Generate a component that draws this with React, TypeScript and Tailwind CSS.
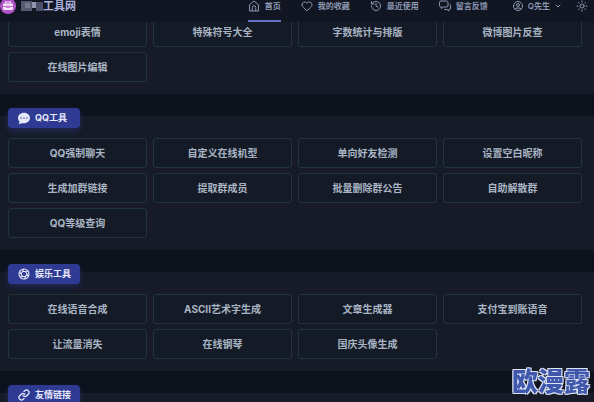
import type { ReactNode } from 'react';
import { ChevronDown, Heart, History, Sun } from 'lucide-react';
import { BsChatDotsFill } from 'react-icons/bs';
import { FiLink } from 'react-icons/fi';
import { TbUserCircle } from 'react-icons/tb';

type ToolSection = {
  title: string;
  icon: ReactNode;
  tools: string[];
};

const sections: ToolSection[] = [
  {
    title: 'QQ工具',
    icon: <BsChatDotsFill className="size-3" />,
    tools: [
      'QQ强制聊天',
      '自定义在线机型',
      '单向好友检测',
      '设置空白昵称',
      '生成加群链接',
      '提取群成员',
      '批量删除群公告',
      '自助解散群',
      'QQ等级查询',
    ],
  },
  {
    title: '娱乐工具',
    icon: <ApertureIcon />,
    tools: [
      '在线语音合成',
      'ASCII艺术字生成',
      '文章生成器',
      '支付宝到账语音',
      '让流量消失',
      '在线钢琴',
      '国庆头像生成',
    ],
  },
  { title: '友情链接', icon: <FiLink className="size-3" strokeWidth={2.5} />, tools: [] },
];

const imageTools = ['emoji表情', '特殊符号大全', '字数统计与排版', '微博图片反查', '在线图片编辑'];

function ApertureIcon() {
  return (
    <svg viewBox="0 0 24 24" className="size-3" fill="none" stroke="currentColor" strokeWidth="2.2">
      <circle cx="12" cy="12" r="10" />
      <path d="M9 7h6l3 5-3 5H9l-3-5zM9 7l2-5M15 7l5-1M18 12l3 5M15 17l-2 5M9 17l-5 1M6 12L3 7" />
    </svg>
  );
}

function HomeIcon() {
  return (
    <svg viewBox="0 0 24 24" className="size-3" fill="none" stroke="currentColor" strokeWidth="2" strokeLinejoin="round">
      <path d="M3 9.5 12 2l9 7.5V22H3z" />
      <path d="M8.5 22v-7a3.5 3.5 0 0 1 7 0v7" />
    </svg>
  );
}

function ChatsIcon() {
  return (
    <svg viewBox="0 0 24 24" className="size-3" fill="none" stroke="currentColor" strokeWidth="2" strokeLinejoin="round">
      <path d="M4 2h11a3 3 0 0 1 3 3v6a3 3 0 0 1-3 3H9l-4 3v-3H4a3 3 0 0 1-3-3V5a3 3 0 0 1 3-3z" />
      <path d="M21 8a3 3 0 0 1 2 3v5a3 3 0 0 1-3 3v3l-4-3h-4a3 3 0 0 1-2-1" />
    </svg>
  );
}

function ToolGrid({ tools }: { tools: string[] }) {
  return (
    <div className="grid grid-cols-4 gap-x-1.5 gap-y-[5px]">
      {tools.map((tool) => (
        <a
          key={tool}
          href="#"
          className="flex h-[30px] items-center justify-center rounded-[3px] border border-[#20353d] bg-[#151b26] text-[10px] font-bold whitespace-nowrap text-[#a9b5c4]"
        >
          {tool}
        </a>
      ))}
    </div>
  );
}

function NavLink({ icon, label, active }: { icon: ReactNode; label: string; active?: boolean }) {
  return (
    <a
      href="#"
      className={
        active
          ? 'flex h-full items-center gap-[5px] border-y-2 border-t-transparent border-b-[#6872c4]'
          : 'flex h-full items-center gap-[5px]'
      }
    >
      {icon}
      {label}
    </a>
  );
}

export default function App() {
  return (
    <div className="h-screen overflow-hidden bg-[#0e121c] font-['Inter','Noto_Sans_CJK_SC',sans-serif]">
      {/* Header */}
      <header className="relative z-10 -mt-2.5 flex h-8 items-center justify-between bg-[#121622] pr-1.5">
        <a href="#" className="flex items-center gap-[5px] text-[11px] leading-3 font-bold text-[#a9b0dc]">
          <svg viewBox="0 0 16 16" className="size-4">
            <circle cx="8" cy="8" r="8" fill="#b052c6" />
            <path d="M5.5 5.5V4h5v1.5" fill="none" stroke="#f2e6fa" strokeWidth="1.2" />
            <rect x="3" y="5.5" width="10" height="6.5" rx="1" fill="#f2e6fa" />
            <path d="M3 8.5h3.5M9.5 8.5H13M6.5 8h3v1.5h-3z" fill="none" stroke="#b052c6" strokeWidth="0.8" />
          </svg>
          <span className="flex items-center">
            <svg viewBox="0 0 22 10" className="h-2.5 w-[22px]">
              <path d="M0 0h11v10H0z" fill="#555a70" />
              <path d="M4 2h5v5H4z" fill="#747990" />
              <path d="M11 1h4v6h-4z" fill="#9095b0" />
              <path d="M15 1h7v9h-7z" fill="#4b5068" />
            </svg>
            工具网
          </span>
        </a>
        <nav className="flex h-full items-center gap-5 text-[8px] font-semibold whitespace-nowrap text-[#8d99b4]">
          <NavLink active icon={<HomeIcon />} label="首页" />
          <NavLink icon={<Heart className="size-3" />} label="我的收藏" />
          <NavLink icon={<History className="size-3" />} label="最近使用" />
          <NavLink icon={<ChatsIcon />} label="留言反馈" />
          <div className="ml-1 flex items-center gap-3.5">
            <button type="button" className="flex items-center gap-1">
              <TbUserCircle className="size-3" />
              Q先生
              <ChevronDown className="size-2" strokeWidth={3} />
            </button>
            <button type="button" aria-label="切换主题">
              <Sun className="size-3" />
            </button>
          </div>
        </nav>
      </header>

      <main className="-mt-[5px] flex flex-col gap-[22px]">
        <section className="bg-[#171b27] pr-3 pb-3 pl-2">
          <ToolGrid tools={imageTools} />
        </section>

        {sections.map((section) => (
          <section key={section.title} className="flex flex-col gap-2.5 bg-[#171b27] pr-3 pb-3 pl-2">
            <h2 className="-mt-2 flex h-5 w-[72px] items-center gap-[5px] rounded-[4px] bg-[#2f3b92] pl-2.5 text-[9px] font-bold whitespace-nowrap text-[#e6e9fb] shadow-[0_3px_6px_#2f3b9270]">
              {section.icon}
              {section.title}
            </h2>
            <ToolGrid tools={section.tools} />
          </section>
        ))}
      </main>

      {/* Watermark */}
      <div className="fixed right-1 bottom-1 text-[26px] leading-8 font-black text-[#3f58ab] [text-shadow:1px_1px_0_#dde3f5,-1px_-1px_0_#dde3f5,1px_-1px_0_#dde3f5,-1px_1px_0_#dde3f5]">
        欧漫露
      </div>
    </div>
  );
}
